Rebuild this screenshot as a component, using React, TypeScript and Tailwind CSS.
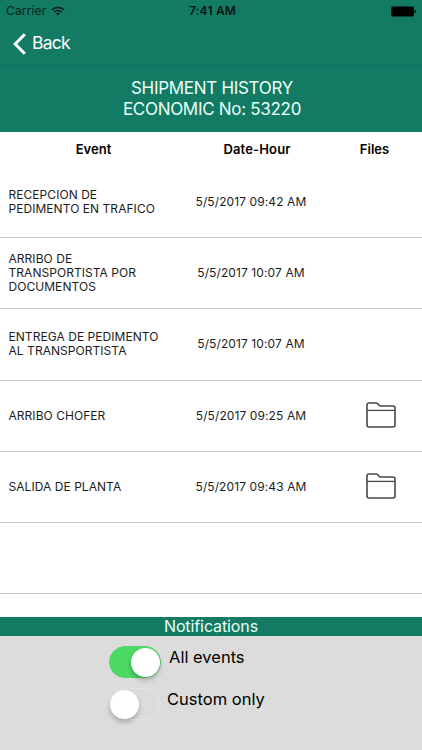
import { useState } from 'react'
import { clsx } from 'clsx'

type ShipmentEvent = {
  name: string
  date: string
  hasFiles?: boolean
}

const events: ShipmentEvent[] = [
  { name: 'RECEPCION DE PEDIMENTO EN TRAFICO', date: '5/5/2017 09:42 AM' },
  { name: 'ARRIBO DE TRANSPORTISTA POR DOCUMENTOS', date: '5/5/2017 10:07 AM' },
  { name: 'ENTREGA DE PEDIMENTO AL TRANSPORTISTA', date: '5/5/2017 10:07 AM' },
  { name: 'ARRIBO CHOFER', date: '5/5/2017 09:25 AM', hasFiles: true },
  { name: 'SALIDA DE PLANTA', date: '5/5/2017 09:43 AM', hasFiles: true },
]

function WifiIcon() {
  return (
    <svg viewBox="0 0 14 10" className="h-[10px] w-[14px]" fill="none" stroke="#06231c" strokeWidth="1.6">
      <path d="M1 3.9a8.4 8.4 0 0 1 12 0" />
      <path d="M3.2 6.1a5.4 5.4 0 0 1 7.6 0" />
      <path d="M7 9.6 4.9 7.5a3 3 0 0 1 4.2 0z" fill="#06231c" stroke="none" />
    </svg>
  )
}

function BatteryIcon() {
  return (
    <svg viewBox="0 0 26 11" className="h-[11px] w-[26px]" fill="#000">
      <rect x="0.3" y="0.5" width="22.6" height="10" rx="1.4" />
      <path d="M23.7 3.8c1 .2 1.4.9 1.4 1.7s-.4 1.5-1.4 1.7z" />
    </svg>
  )
}

function FolderIcon() {
  return (
    <svg viewBox="0 0 30 26" className="h-[26px] w-[30px]" fill="none" stroke="#434851" strokeWidth="1.6">
      <path d="M1 23V3Q1 1 3 1H10.2Q11.2 1 11.8 1.8L13 3.2Q13.6 4 14.6 4H27Q29 4 29 6V23Q29 25 27 25H3Q1 25 1 23Z" />
      <path d="M1 8.4H29" strokeWidth="1.3" />
    </svg>
  )
}

type ToggleProps = {
  checked: boolean
  label: string
  onChange: (checked: boolean) => void
}

function Toggle({ checked, label, onChange }: ToggleProps) {
  return (
    <button
      type="button"
      role="switch"
      aria-checked={checked}
      aria-label={label}
      onClick={() => onChange(!checked)}
      className={clsx(
        'flex h-8 w-[52px] shrink-0 items-center rounded-full border-[1.5px]',
        checked ? 'justify-end border-[#4cd964] bg-[#4cd964]' : 'justify-start border-[#e5e5e5]'
      )}
    >
      <span className="size-[29px] rounded-full bg-white shadow-[0_3px_5px_rgba(0,0,0,0.25)]" />
    </button>
  )
}

export default function App() {
  const [allEvents, setAllEvents] = useState(true)
  const [customOnly, setCustomOnly] = useState(false)

  return (
    <div className="flex h-[750px] w-[422px] flex-col overflow-hidden bg-white font-['Inter',sans-serif] text-black">
      <header className="h-[66px] shrink-0 border-b border-[#0f7060] bg-[#137a63]">
        <div className="grid h-[22px] grid-cols-3 items-center pr-[5px] pl-[6px] text-[12px]">
          <div className="flex items-center gap-[5px] text-[#06231c]">
            <span className="tracking-[0.15px]">Carrier</span>
            <WifiIcon />
          </div>
          <span className="pl-[2px] text-center font-semibold tracking-[0.2px] text-[#03150f]">7:41 AM</span>
          <div className="flex justify-end">
            <BatteryIcon />
          </div>
        </div>
        <button type="button" className="flex h-[43px] items-center gap-[6px] pl-[13px] text-white">
          <svg viewBox="0 0 13 22" className="h-[22px] w-[13px]" fill="none" stroke="#fff" strokeWidth="3">
            <path d="M11.8 1.2 2.2 11l9.6 9.8" />
          </svg>
          <span className="text-[17.5px] tracking-[-0.75px]">Back</span>
        </button>
      </header>

      <h1 className="h-[66px] shrink-0 bg-[#137a63] pt-[12px] pl-[2px] text-center text-[17px] leading-[20.5px] tracking-[-0.3px] text-[#e9fffa]">
        SHIPMENT HISTORY
        <br />
        ECONOMIC No: 53220
      </h1>

      <div className="grid h-[35px] shrink-0 grid-cols-[187px_140px_95px] items-center text-center text-[13px] font-semibold">
        <span>Event</span>
        <span className="tracking-[0.15px]">Date-Hour</span>
        <span>Files</span>
      </div>

      <ul className="min-h-0 flex-1 text-[12px] text-[#1c1c1c]">
        {events.map((event) => (
          <li
            key={event.name}
            className="grid h-[71.2px] grid-cols-[178px_146px_98px] items-center border-b border-[#c8c8cc]"
          >
            <span className="ml-[8.5px] w-[158px] leading-[14.2px] tracking-[0.05px]">{event.name}</span>
            <span className="text-center tracking-[0.1px]">{event.date}</span>
            <span className="flex justify-center pb-px pl-[15px]">{event.hasFiles && <FolderIcon />}</span>
          </li>
        ))}
        <li className="h-[71.2px] border-b border-[#c8c8cc]" />
      </ul>

      <footer className="h-[133.5px] shrink-0 bg-[#dcdcdc]">
        <h2 className="h-[19.5px] bg-[#137a63] text-center text-[16px] leading-[19px] tracking-[-0.1px] text-[#e9fffa]">
          Notifications
        </h2>
        <div className="flex flex-col gap-[10px] pt-[10px] pl-[109px] text-[16.5px]">
          <div className="flex h-8 gap-2">
            <Toggle checked={allEvents} label="All events" onChange={setAllEvents} />
            <span className="leading-[22px]">All events</span>
          </div>
          <div className="flex h-8 gap-[6px]">
            <Toggle checked={customOnly} label="Custom only" onChange={setCustomOnly} />
            <span className="leading-[22px]">Custom only</span>
          </div>
        </div>
      </footer>
    </div>
  )
}
